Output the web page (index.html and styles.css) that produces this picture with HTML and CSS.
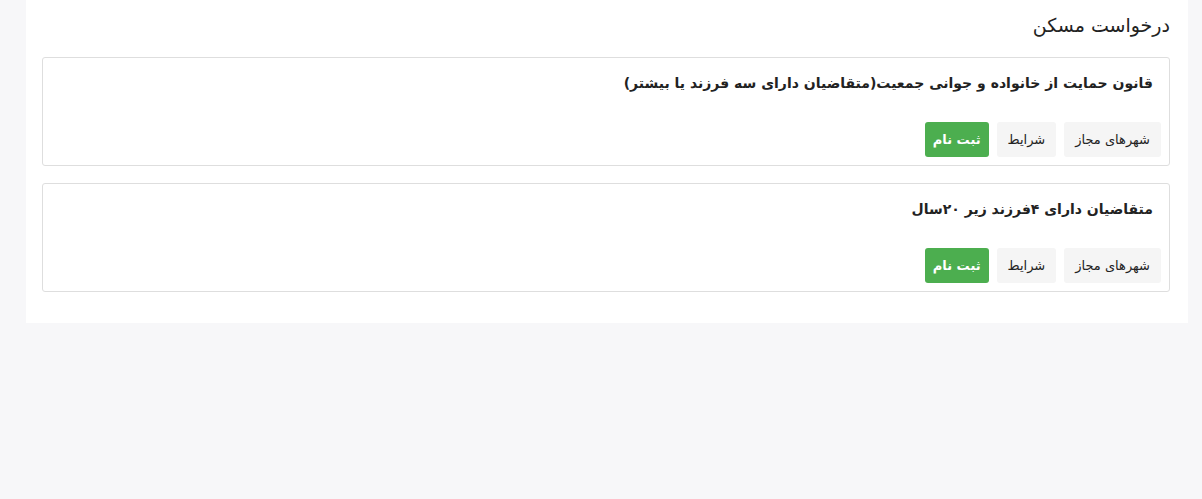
FILE: index.html
```html
<!DOCTYPE html>
<html lang="fa" dir="rtl">
<head>
    <meta charset="UTF-8">
    <meta name="viewport" content="width=device-width, initial-scale=1.0">
    <title>درخواست مسکن</title>
    <link rel="stylesheet" href="styles.css">
</head>
<body>
    <section class="panel">
        <h2 class="panel-title">درخواست مسکن</h2>

        <div class="plan">
            <h3 class="plan-title">قانون حمایت از خانواده و جوانی جمعیت(متقاضیان دارای سه فرزند یا بیشتر)</h3>
            <div class="plan-actions">
                <a href="#" class="btn btn-light">شهرهای مجاز</a>
                <a href="#" class="btn btn-light">شرایط</a>
                <a href="#" class="btn btn-green">ثبت نام</a>
            </div>
        </div>

        <div class="plan">
            <h3 class="plan-title">متقاضیان دارای ۴فرزند زیر ۲۰سال</h3>
            <div class="plan-actions">
                <a href="#" class="btn btn-light">شهرهای مجاز</a>
                <a href="#" class="btn btn-light">شرایط</a>
                <a href="#" class="btn btn-green">ثبت نام</a>
            </div>
        </div>
    </section>
</body>
</html>
```

FILE: styles.css
```css
/* Page base */
body, html {
    margin: 0;
    padding: 0;
    font-family: "DejaVu Sans", "Noto Sans", sans-serif;
    background-color: #f7f7f9;
    color: #212529;
}

/* White panel */
.panel {
    background-color: #fff;
    margin: 0 14px 0 26px;
    padding: 0 18px 31px 16px;
}

.panel-title {
    margin: 0;
    padding: 14px 0 0;
    height: 57px;
    box-sizing: border-box;
    font-size: 19px;
    font-weight: normal;
    color: #222;
}

/* Plan card */
.plan {
    border: 1px solid #dedede;
    border-radius: 3px;
    padding: 0 8px 8px;
    margin-bottom: 17px;
}

.plan:last-child {
    margin-bottom: 0;
}

.plan-title {
    margin: 0;
    padding: 17px 8px 0;
    height: 64px;
    box-sizing: border-box;
    font-size: 14px;
    font-weight: bold;
    color: #222;
}

.plan-actions {
    display: flex;
    gap: 8px;
}

.btn {
    display: inline-flex;
    align-items: center;
    justify-content: center;
    height: 35px;
    padding: 0 11px;
    border-radius: 3px;
    font-size: 13px;
    text-decoration: none;
}

.btn-light {
    background-color: #f5f5f5;
    color: #222;
}

.btn-green {
    background-color: #4cae4f;
    color: #fff;
    font-weight: bold;
    padding: 0 8px;
}
```
